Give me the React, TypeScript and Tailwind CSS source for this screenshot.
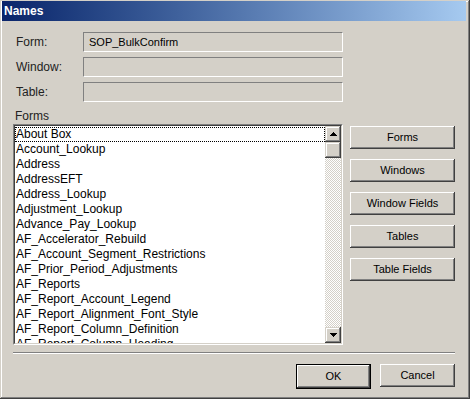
const forms = [
  "About Box",
  "Account_Lookup",
  "Address",
  "AddressEFT",
  "Address_Lookup",
  "Adjustment_Lookup",
  "Advance_Pay_Lookup",
  "AF_Accelerator_Rebuild",
  "AF_Account_Segment_Restrictions",
  "AF_Prior_Period_Adjustments",
  "AF_Reports",
  "AF_Report_Account_Legend",
  "AF_Report_Alignment_Font_Style",
  "AF_Report_Column_Definition",
  "AF_Report_Column_Heading",
];

const sideButtons = [
  "Forms",
  "Windows",
  "Window Fields",
  "Tables",
  "Table Fields",
];

function Arrow({ down }: { down?: boolean }) {
  return (
    <svg
      width="7"
      height="4"
      viewBox="0 0 7 4"
      shapeRendering="crispEdges"
      className={down ? "rotate-180" : ""}
    >
      <polygon points="3.5,0 7,4 0,4" fill="#000" />
    </svg>
  );
}

function ScrollButton({ children }: { children?: React.ReactNode }) {
  return (
    <div
      className="
        flex
        h-[16px]
        w-[16px]
        items-center
        justify-center
        bg-[#d4d0c8]
        shadow-[inset_-1px_-1px_#404040,inset_1px_1px_#d4d0c8,inset_-2px_-2px_#808080,inset_2px_2px_#ffffff]
      "
    >
      {children}
    </div>
  );
}

function PushButton({ label }: { label: string }) {
  return (
    <div
      className="
        flex
        h-[23px]
        w-full
        items-center
        justify-center
        bg-[#d4d0c8]
        text-[11px]
        text-black
        shadow-[inset_-1px_-1px_#404040,inset_1px_1px_#ffffff,inset_-2px_-2px_#808080,inset_2px_2px_#d4d0c8]
      "
    >
      {label}
    </div>
  );
}

function Field({ label, value }: { label: string; value?: string }) {
  return (
    <div className="flex h-[20px] items-center">
      <div className="w-[70px] pl-[3px] text-[12px] text-[#222]">
        {label}
      </div>
      <div
        className="
          flex
          h-[20px]
          w-[260px]
          items-center
          border
          border-t-[#808080]
          border-l-[#808080]
          border-b-white
          border-r-white
          pl-[5px]
          text-[11px]
          text-black
        "
      >
        {value}
      </div>
    </div>
  );
}

export default function App() {
  return (
    <div
      className="
        flex
        h-[399px]
        w-[470px]
        flex-col
        bg-[#d4d0c8]
        font-['Liberation_Sans',Arial,sans-serif]
        shadow-[inset_-1px_-1px_#404040,inset_1px_1px_#d4d0c8,inset_-2px_-2px_#808080,inset_2px_2px_#ffffff]
      "
    >
      {/* TITLE BAR */}
      <div
        className="
          mt-[1px]
          ml-[2px]
          mr-[4px]
          flex
          h-[20px]
          items-center
          bg-linear-to-r
          from-[#0a246a]
          to-[#a6caf0]
          pl-[2px]
          text-[12px]
          font-bold
          text-white
        "
      >
        Names
      </div>

      {/* BODY */}
      <div className="flex flex-col pl-[13px] pr-[15px] pt-[11px]">
        <div className="flex flex-col gap-[5px]">
          <Field label="Form:" value="SOP_BulkConfirm" />
          <Field label="Window:" />
          <Field label="Table:" />
        </div>

        <div className="flex justify-between">
          <div className="flex flex-col">
            <div className="mt-[7px] h-[15px] pl-[2px] text-[12px] leading-[15px] text-[#222]">
              Forms
            </div>

            {/* LIST */}
            <div
              className="
                h-[221px]
                w-[330px]
                border
                border-t-[#808080]
                border-l-[#808080]
                border-b-white
                border-r-white
              "
            >
              <div
                className="
                  flex
                  h-full
                  border
                  border-t-[#404040]
                  border-l-[#404040]
                  border-b-[#d4d0c8]
                  border-r-[#d4d0c8]
                "
              >
                <div className="flex-1 overflow-hidden bg-white pt-[1px]">
                  {forms.map((name, index) => (
                    <div
                      key={name}
                      className={
                        index === 0
                          ? "h-[15px] pl-[1px] text-[12px] leading-[15px] whitespace-nowrap text-black outline-1 -outline-offset-1 outline-dotted outline-black"
                          : "h-[15px] pl-[1px] text-[12px] leading-[15px] whitespace-nowrap text-black"
                      }
                    >
                      {name}
                    </div>
                  ))}
                </div>

                <div className="flex w-[16px] flex-col">
                  <ScrollButton>
                    <Arrow />
                  </ScrollButton>
                  <ScrollButton />
                  <div className="flex-1 bg-[image:repeating-conic-gradient(#d4d0c8_0%_25%,#ffffff_0%_50%)] bg-size-[2px_2px]" />
                  <ScrollButton>
                    <Arrow down />
                  </ScrollButton>
                </div>
              </div>
            </div>
          </div>

          {/* SIDE BUTTONS */}
          <div className="flex w-[105px] flex-col gap-[10px] pt-[24px]">
            {sideButtons.map((label) => (
              <PushButton key={label} label={label} />
            ))}
          </div>
        </div>

        {/* SEPARATOR */}
        <div className="mt-[7px] h-[2px] border-t border-b border-t-[#808080] border-b-white" />

        {/* FOOTER */}
        <div className="mt-[10px] flex justify-end gap-[9px]">
          <div className="w-[75px] border border-black">
            <PushButton label="OK" />
          </div>
          <div className="w-[75px]">
            <PushButton label="Cancel" />
          </div>
        </div>
      </div>
    </div>
  );
}
